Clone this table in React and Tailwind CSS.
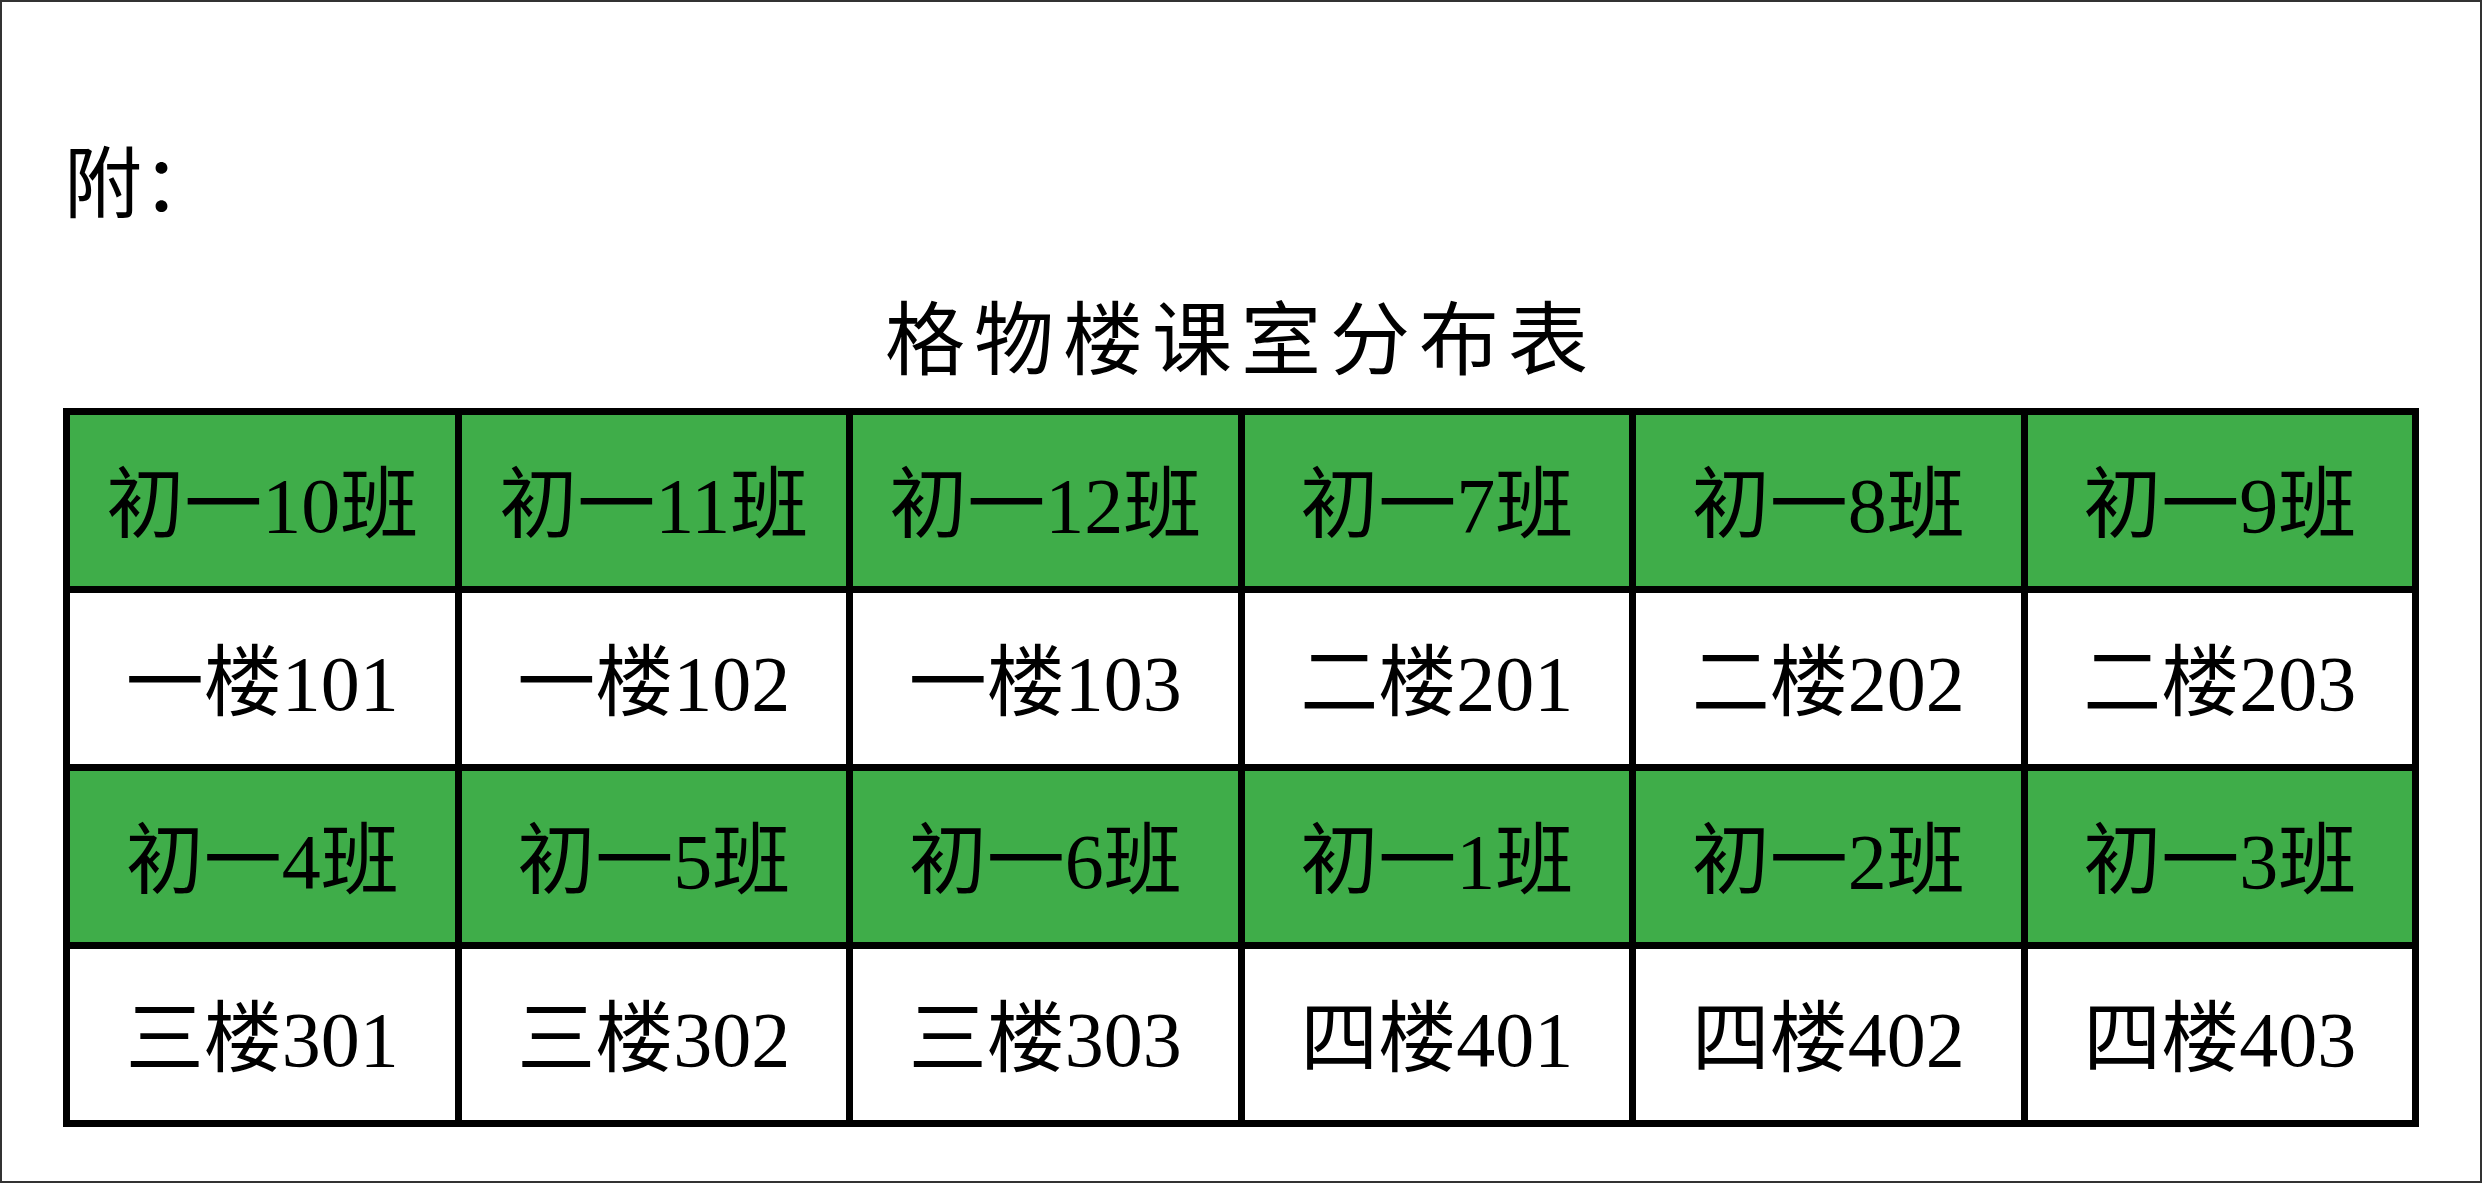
const rows = [
  { green: true, cells: ["初一10班", "初一11班", "初一12班", "初一7班", "初一8班", "初一9班"] },
  { green: false, cells: ["一楼101", "一楼102", "一楼103", "二楼201", "二楼202", "二楼203"] },
  { green: true, cells: ["初一4班", "初一5班", "初一6班", "初一1班", "初一2班", "初一3班"] },
  { green: false, cells: ["三楼301", "三楼302", "三楼303", "四楼401", "四楼402", "四楼403"] },
]

const font = { fontFamily: '"Liberation Serif", "Noto Sans CJK SC", serif' }

export default function App() {
  return (
    <div
      className="w-[2482px] h-[1183px] border-2 border-[#333333] bg-white text-black overflow-hidden"
      style={font}
    >
      <div className="pl-[62px] pt-[145px] text-[78px] leading-none">附：</div>

      <h1 className="mt-[76px] text-center text-[80px] leading-none tracking-[9px]">格物楼课室分布表</h1>

      <div className="mt-[27px] mx-[61px] grid grid-cols-6 gap-[7px] bg-black p-[7px]">
        {rows.map((row, i) =>
          row.cells.map((text) => (
            <div
              key={i + text}
              className={
                "h-[171px] flex items-center justify-center pt-[10px] text-[78px] leading-none " +
                (row.green ? "bg-[#3fad49]" : "bg-white")
              }
            >
              {text}
            </div>
          ))
        )}
      </div>
    </div>
  )
}
